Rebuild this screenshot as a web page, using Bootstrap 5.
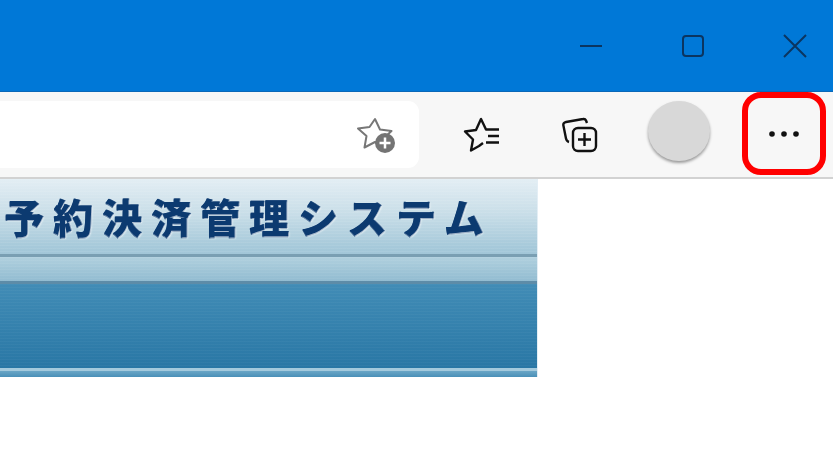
<!DOCTYPE html>
<html lang="ja">
<head>
  <meta charset="UTF-8">
  <meta name="viewport" content="width=device-width, initial-scale=1.0">
  <title>予約決済管理システム</title>
  <link href="https://cdn.jsdelivr.net/npm/bootstrap@5.3.0/dist/css/bootstrap.min.css" rel="stylesheet">
  <style>
    body {
      background-color: #fff;
      overflow: hidden;
    }
    .title-bar {
      height: 92px;
      background-color: #0078d7;
      border-bottom: 1px solid #0a68b8;
      padding-top: 32px;
      padding-right: 26px;
      gap: 78px;
    }
    .win-btn {
      width: 24px;
      height: 28px;
      color: #0b3560;
    }
    .win-btn svg {
      filter: blur(.4px);
    }
    .tool-bar {
      height: 87px;
      background-color: #f7f7f7;
      border-bottom: 2px solid #d2d2d2;
    }
    .address-box {
      width: 419px;
      height: 67px;
      margin-top: 9px;
      background-color: #fff;
      border-radius: 0 11px 11px 0;
      padding-right: 23px;
    }
    .tool-icons {
      margin-top: 9px;
    }
    .tool-fav {
      width: 126px;
      height: 67px;
    }
    .tool-coll {
      width: 70px;
      height: 67px;
    }
    .tool-icons svg {
      filter: blur(.35px);
    }
    .avatar-dot {
      width: 62px;
      height: 60px;
      background-color: #d8d8d8;
      border-radius: 50%;
      box-shadow: 0 2px 3px rgba(0, 0, 0, .38);
    }
    .avatar-wrap {
      width: 127px;
      height: 67px;
    }
    .more-btn {
      width: 84px;
      height: 83px;
      margin-top: -9px;
      border: 6px solid #f00;
      border-radius: 19px;
    }
    .banner {
      width: 538px;
      border-right: 1px solid #e3eef5;
    }
    .banner-head {
      height: 75px;
      background:
        repeating-linear-gradient(180deg, rgba(255, 255, 255, .07) 0 1px, rgba(255, 255, 255, 0) 1px 3px),
        linear-gradient(180deg, #e3eef4 0%, #c9dee8 45%, #a6c9da 90%, #a2c6d8 100%);
      font-family: "Noto Sans CJK JP", "Liberation Sans", sans-serif;
      font-weight: 900;
      font-size: 40px;
      line-height: 74px;
      letter-spacing: 9px;
      color: #0c3a70;
      padding-left: 4px;
      white-space: nowrap;
      overflow: hidden;
    }
    .banner-head span {
      display: block;
      filter: blur(.75px);
      text-shadow: 1px 1px 2px rgba(255, 255, 255, .8), .8px 0 0 #0c3a70, 0 .6px 0 #0c3a70;
    }
    .band-line {
      height: 3px;
      background-color: #7a9fb3;
    }
    .band-light {
      height: 24px;
      background:
        repeating-linear-gradient(180deg, rgba(255, 255, 255, .05) 0 1px, rgba(255, 255, 255, 0) 1px 3px),
        linear-gradient(180deg, #b0d0de 0%, #92bcd1 100%);
    }
    .band-line-dark {
      height: 3px;
      background-color: #5d8ca8;
    }
    .band-main {
      height: 84px;
      background:
        repeating-linear-gradient(180deg, rgba(255, 255, 255, .03) 0 1px, rgba(255, 255, 255, 0) 1px 3px),
        linear-gradient(180deg, #418cb6 0%, #2977a5 100%);
    }
    .band-pale {
      height: 3px;
      background-color: #a4cadd;
    }
    .band-foot {
      height: 6px;
      background: linear-gradient(180deg, #6aa6c6 0%, #4a90b8 100%);
    }
  </style>
</head>
<body>
  <div class="title-bar d-flex justify-content-end">
    <div class="win-btn d-flex justify-content-center align-items-center">
      <svg width="24" height="24" viewBox="0 0 24 24" fill="none" stroke="currentColor" stroke-width="2"><path d="M1 12h22"/></svg>
    </div>
    <div class="win-btn d-flex justify-content-center align-items-center">
      <svg width="24" height="24" viewBox="0 0 24 24" fill="none" stroke="currentColor" stroke-width="2"><rect x="2" y="2" width="20" height="20" rx="3"/></svg>
    </div>
    <div class="win-btn d-flex justify-content-center align-items-center">
      <svg width="24" height="24" viewBox="0 0 24 24" fill="none" stroke="currentColor" stroke-width="2"><path d="M1 1l22 22M23 1L1 23"/></svg>
    </div>
  </div>

  <div class="tool-bar d-flex">
    <div class="address-box d-flex justify-content-end align-items-center">
      <svg width="40" height="38" viewBox="0 0 40 38" fill="none">
        <path d="M19 3l5 10.500 11.500 1.500-8 7.500 2 9-10.500-5.500-10.500 5.500 2-11.500-8.500-7.500 11.500-1.500z" stroke="#777" stroke-width="2" stroke-linejoin="round"/>
        <circle cx="29" cy="27" r="10" fill="#747474"/>
        <path d="M23.500 27h11M29 21.500v11" stroke="#fff" stroke-width="2.500"/>
      </svg>
    </div>
    <div class="tool-icons d-flex">
      <div class="tool-fav d-flex justify-content-center align-items-center">
        <svg width="38" height="36" viewBox="0 0 38 36" fill="none" stroke="#111" stroke-width="2.400" stroke-linejoin="round">
          <path d="M25 12.500h-2l-5-10.500-5 11-11 1.500 8 8-2 11 8-4.500 4-3"/>
          <path d="M25 12.500h11M25 19h11M23 25.500h13"/>
        </svg>
      </div>
      <div class="tool-coll d-flex justify-content-center align-items-center">
        <svg width="38" height="38" viewBox="0 0 38 38" fill="none" stroke="#111" stroke-width="2.400" stroke-linejoin="round">
          <path d="M26 7l-1-2.500c-.5-1.200-1.500-1.800-3-1.500L5 6c-2 .4-3 1.800-2.600 3.600l2.600 13c.4 1.800 1.500 3 3 3.400"/>
          <rect x="12" y="12" width="23" height="23" rx="5"/>
          <path d="M23.500 17v13M17 23.500h13"/>
        </svg>
      </div>
      <div class="avatar-wrap d-flex justify-content-center">
        <div class="avatar-dot"></div>
      </div>
      <div class="more-btn d-flex justify-content-center align-items-center">
        <svg width="32" height="6" viewBox="0 0 32 6" fill="#111"><circle cx="4" cy="3" r="2.800"/><circle cx="16" cy="3" r="2.800"/><circle cx="28" cy="3" r="2.800"/></svg>
      </div>
    </div>
  </div>

  <div class="banner">
    <div class="banner-head"><span>予約決済管理システム</span></div>
    <div class="band-line"></div>
    <div class="band-light"></div>
    <div class="band-line-dark"></div>
    <div class="band-main"></div>
    <div class="band-pale"></div>
    <div class="band-foot"></div>
  </div>
</body>
</html>
